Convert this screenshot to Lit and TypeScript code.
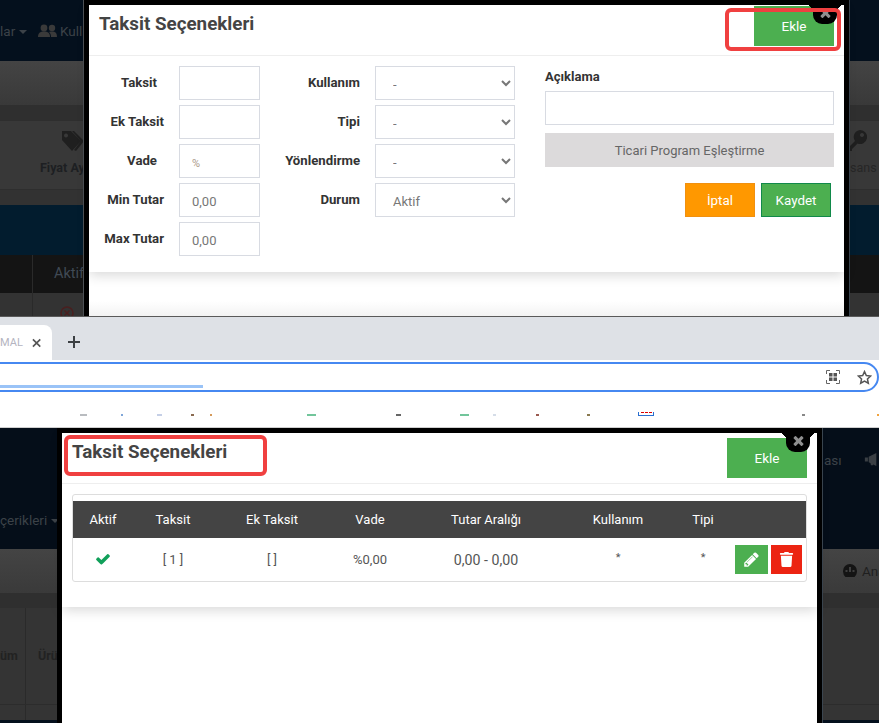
import { LitElement, html, css } from "lit";
import { customElement } from "lit/decorators.js";

const FA_TIMES = "M1490 1322q0 40-28 68l-136 136q-28 28-68 28t-68-28l-294-294-294 294q-28 28-68 28t-68-28l-136-136q-28-28-28-68t28-68l294-294-294-294q-28-28-28-68t28-68l136-136q28-28 68-28t68 28l294 294 294-294q28-28 68-28t68 28l136 136q28 28 28 68t-28 68l-294 294 294 294q28 28 28 68z";
const FA_CHECK = "M1671 566q0 40-28 68l-724 724-136 136q-28 28-68 28t-68-28l-136-136-362-362q-28-28-28-68t28-68l136-136q28-28 68-28t68 28l294 295 656-657q28-28 68-28t68 28l136 136q28 28 28 68z";
const FA_PENCIL = "M491 1536l91-91-235-235-91 91v107h128v128h107zm523-928q0-22-22-22-10 0-17 7l-542 542q-7 7-7 17 0 22 22 22 10 0 17-7l542-542q7-7 7-17zm-54-192l416 416-832 832h-416v-416zm683 96q0 53-37 90l-166 166-416-416 166-165q36-38 90-38 53 0 91 38l235 234q37 39 37 91z";
const FA_TRASH = "M432 32H312l-9.4-18.7A24 24 0 0 0 281.1 0H166.8a23.72 23.72 0 0 0-21.4 13.3L136 32H16A16 16 0 0 0 0 48v32a16 16 0 0 0 16 16h416a16 16 0 0 0 16-16V48a16 16 0 0 0-16-16zM53.2 467a48 48 0 0 0 47.9 45h245.8a48 48 0 0 0 47.9-45L416 128H32z";

const specks: [number, number, string][] = [
  [80, 7, "#b9bcc0"], [121, 2, "#7fa6d8"], [157, 5, "#c5cfe6"], [191, 3, "#8a6a50"], [210, 2, "#d59a5a"],
  [307, 9, "#72c59b"], [396, 5, "#666666"], [460, 9, "#72c59b"], [493, 3, "#d5dde8"], [536, 3, "#9a5a50"],
  [587, 3, "#8a7a50"], [802, 3, "#888888"], [877, 2, "#f2a33c"],
];

@customElement("app-root")
export class AppRoot extends LitElement {
  static styles = css`
    :host { display: block; width: 879px; height: 723px; overflow: hidden; font-family: Roboto, "Noto Sans", sans-serif; color: #444; background: #fff; }
    * { box-sizing: border-box; }
    .shot { position: relative; overflow: hidden; }
    .shot.top { height: 316px; }
    .shot.low { height: 295px; }
    .band { position: relative; }
    .t1 { height: 61px; background: #04101d; }
    .t2 { height: 44px; background: linear-gradient(#444444, #393939); }
    .t3 { height: 15px; background: #2f2f2f; }
    .t4 { height: 70px; background: #383838; border-top: 1px solid #2e2e2e; border-bottom: 1px solid #2e2e2e; }
    .t5 { height: 15px; background: #323232; }
    .t6 { height: 50px; background: #021c2e; }
    .t7 { height: 38px; background: #141414; }
    .t8 { height: 23px; background: #333333; }
    .l1 { height: 121px; background: #050e19; }
    .l2 { height: 44px; background: linear-gradient(#444444, #3a3a3a); }
    .l3 { height: 127px; background: #343434; border-top: 15px solid #2f2f2f; }
    .l4 { height: 3px; background: #04101d; }
    .ghost { position: absolute; white-space: nowrap; font-size: 13.5px; color: #3c4248; }
    .ghost.bold { font-weight: 700; font-size: 12.5px; color: #1d1f22; }
    .ghost.aktif { font-size: 14.5px; color: #404a55; }
    .ghost svg { display: block; }
    .caret { display: inline-block; width: 0; height: 0; border: 4px solid transparent; border-top-color: #3c4248; border-bottom: 0; margin-left: 4px; vertical-align: middle; }
    .cell-line { position: absolute; top: 0; bottom: 0; width: 1px; background: #2a2a2a; }
    .row-line { position: absolute; left: 0; right: 0; bottom: 15px; height: 1px; background: #2c2c2c; }

    .dialog { position: absolute; top: 0; bottom: 0; width: 765px; border: 5px solid #000; border-bottom: 0; background: #fff; }
    .top .dialog { left: 84px; box-shadow: 1px 0 0 #3b4650, -1px 0 0 #4d5155; background: linear-gradient(#fff 296px, #f3f3f3); }
    .low .dialog { left: 57px; box-shadow: 1px 0 0 #3b4650; }
    .tab { position: absolute; top: -5px; right: 7px; width: 24px; height: 24px; background: #000; border-radius: 0 0 9px 9px; display: flex; align-items: center; justify-content: center; padding-top: 1px; }
    .tab::before, .tab::after { content: ""; position: absolute; top: 5px; width: 7px; height: 7px; }
    .tab::before { left: -7px; background: radial-gradient(circle at 0 100%, transparent 7px, #000 7px); }
    .tab::after { right: -7px; background: radial-gradient(circle at 100% 100%, transparent 7px, #000 7px); }
    .tab svg { width: 15px; height: 15px; fill: #8f8f8f; }
    .sheet { background: #fff; box-shadow: 0 3px 12px rgba(0, 0, 0, 0.16); }
    .head { height: 51px; border-bottom: 1px solid #eeeeee; display: flex; justify-content: space-between; padding: 0 10px; position: relative; }
    h2 { margin: 8px 0 0; font-size: 18.8px; line-height: 22px; font-weight: 700; color: #444; }
    .add { width: 80px; height: 40px; background: #4caf50; color: #fff; border: 0; font: 400 13.5px Roboto, sans-serif; padding: 0; }
    .top .add { margin-top: 1px; }
    .low .head { padding-top: 5px; }
    .low h2 { margin-top: 3px; }

    .form { display: flex; height: 216px; padding-top: 10px; }
    .col { display: grid; row-gap: 5px; grid-auto-rows: 34px; align-content: start; align-items: center; }
    .f1 { grid-template-columns: 75px 81px; column-gap: 15px; }
    .f2 { grid-template-columns: 100px 140px; column-gap: 15px; }
    .f3 { width: 289px; margin-left: 30px; }
    label { text-align: right; font-size: 13.2px; font-weight: 700; color: #333; margin-top: -2px; white-space: nowrap; }
    label.in { padding-right: 7px; }
    input, select { width: 100%; height: 34px; border: 1.5px solid #d8dbe2; border-radius: 0; background: #fff; color: #777; font: 400 13px Roboto, sans-serif; padding: 2px 12px 0; outline: 0; }
    select { padding-left: 13px; }
    input::placeholder { color: #a98; font-size: 11px; opacity: 1; }
    .f3 .cap { font-size: 13px; font-weight: 700; color: #333; height: 20px; line-height: 21px; margin-bottom: 5px; }
    .match { display: block; width: 100%; height: 34px; margin-top: 8px; border: 0; background: #dcdadb; color: #666; font: 400 13px Roboto, sans-serif; }
    .acts { display: flex; justify-content: flex-end; gap: 6px; margin-top: 16px; padding-right: 3px; }
    .acts button { width: 70px; height: 34px; color: #fff; font: 400 13.4px Roboto, sans-serif; padding: 0; }
    .cancel { background: #ff9800; border: 1px solid #f09010; }
    .save { background: #4caf50; border: 1px solid #11894a; }

    .body { padding: 10px 10px 25px; }
    .card { height: 88px; border: 1px solid #dddddd; border-radius: 3px; padding-top: 6px; }
    .grid { display: grid; grid-template-columns: 60px 80px 118px 78px 154px 110px 60px 1fr; align-items: center; justify-items: center; }
    .thead { height: 37px; background: #444444; color: #fff; font-size: 13px; }
    .tbody { height: 43px; font-size: 13px; color: #555; }
    .range { font-size: 14.2px; }
    .tbody svg.ok { width: 16px; height: 16px; fill: #11a05a; display: block; margin-top: -2px; }
    .star { font-size: 11px; margin-top: -5px; }
    .rowacts { display: flex; gap: 3px; margin-top: -1px; justify-self: start; padding-left: 2px; }
    .rowacts span { height: 29px; display: flex; align-items: center; justify-content: center; }
    .edit { width: 33px; background: #4caf50; }
    .del { width: 31px; background: #ec2412; }
    .rowacts svg { width: 15px; height: 15px; fill: #fff; }
    .rowacts .edit svg { width: 17px; height: 17px; }
    .mark { position: absolute; border: 4px solid #f04040; border-radius: 6px; pointer-events: none; }
    .mark.m1 { left: 725px; top: 8px; width: 116px; height: 43px; }
    .mark.m2 { left: 64px; top: 7px; width: 203px; height: 41px; }

    .chrome { height: 112px; position: relative; background: #fff; border-top: 1px solid #5a5a5a; border-bottom: 1px solid #cfcfcf; }
    .strip { height: 43px; background: #dee1e6; padding-top: 8px; display: flex; align-items: flex-start; }
    .tabb { width: 52px; height: 35px; background: #fff; border-radius: 0 8px 0 0; display: flex; align-items: center; justify-content: flex-end; padding-right: 11px; gap: 9px; font-size: 11px; color: #b4b4c0; position: relative; }
    .tabb svg { width: 10px; height: 10px; stroke: #555; stroke-width: 1.8; display: block; }
    .plus { margin-left: 15px; margin-top: 10px; width: 14px; height: 14px; }
    .plus svg { display: block; stroke: #3c4043; stroke-width: 2; }
    .omni { position: relative; height: 30px; margin-top: 2px; margin-left: -20px; border: 2px solid #4688f1; border-radius: 0 15px 15px 0; display: flex; justify-content: flex-end; align-items: center; gap: 17px; padding-right: 5px; }
    .omni svg { display: block; }
    .progress { position: absolute; left: 18px; bottom: 2px; width: 203px; height: 3px; background: #9ac3f7; }
    .speck { position: absolute; top: 97px; height: 2px; }
    .fav { position: absolute; left: 638px; top: 95px; width: 16px; height: 4px; border: 1px solid #2a6fd0; border-top: 0; display: flex; justify-content: center; gap: 1px; }
    .fav i { width: 3px; height: 1px; background: #d00; }
  `;

  private closeTab() {
    return html`<div class="tab"><svg viewBox="0 0 1792 1792"><path d=${FA_TIMES}></path></svg></div>`;
  }

  private backdropTop() {
    return html`
      <div class="band t1">
        <span class="ghost" style="left:0;top:23px">lar<i class="caret"></i></span>
        <span class="ghost" style="left:38px;top:24px">
          <svg width="19" height="14" viewBox="0 0 19 14" fill="#3a3a3a"><circle cx="6" cy="4" r="3.4"></circle><circle cx="14" cy="4" r="3.2"></circle><path d="M0 13c0-4 2-5.5 6-5.5s6 1.5 6 5.5zM13 13c0-2-.5-4-2-5 1-.5 2-.6 3-.6 3.500 0 5 1.600 5 5.600z"></path></svg>
        </span>
        <span class="ghost" style="left:60px;top:23px">Kull</span>
      </div>
      <div class="band t2"></div>
      <div class="band t3"></div>
      <div class="band t4">
        <span class="ghost" style="left:61px;top:9px">
          <svg width="24" height="22" viewBox="0 0 24 22" fill="#1f1f1f"><path d="M1 1h9l10 10-9 10L1 10zM5 3.500a2 2 0 1 0 .01 0zM13 1l10 10-8 10-2-1 7-9-9-10z"></path></svg>
        </span>
        <span class="ghost bold" style="left:40px;top:39px">Fiyat Ayarları</span>
        <span class="ghost" style="left:849px;top:9px">
          <svg width="18" height="22" viewBox="0 0 18 22" fill="#1f1f1f"><path d="M11 0a7 7 0 1 1-2.500 13.500L3 19v2H0v-4l6-6A7 7 0 0 1 11 0zm2 3a2 2 0 1 0 .01 0z"></path></svg>
        </span>
        <span class="ghost bold" style="left:850px;top:39px;color:#262626;font-weight:400">sans</span>
      </div>
      <div class="band t5"></div>
      <div class="band t6"></div>
      <div class="band t7">
        <i class="cell-line" style="left:32px"></i>
        <span class="ghost aktif" style="left:54px;top:10px">Aktif</span>
      </div>
      <div class="band t8">
        <i class="cell-line" style="left:32px"></i>
        <span class="ghost" style="left:60px;top:13px">
          <svg width="14" height="14" viewBox="0 0 14 14" fill="none" stroke="#4a1f1f" stroke-width="1.500"><circle cx="7" cy="7" r="6"></circle><path d="M4.500 4.500l5 5m0-5l-5 5"></path></svg>
        </span>
      </div>
    `;
  }

  private backdropLow() {
    return html`
      <div class="band l1">
        <span class="ghost" style="left:0;top:84px">çerikleri<i class="caret"></i></span>
        <span class="ghost" style="left:824px;top:24px">ası</span>
        <span class="ghost" style="left:864px;top:25px">
          <svg width="17" height="13" viewBox="0 0 20 17" fill="#3a3f44"><path d="M0 6h4v5H0zM5 5l10-5v17L5 12zM7 12h3l1 4H8z"></path></svg>
        </span>
      </div>
      <div class="band l2">
        <span class="ghost" style="left:843px;top:15px">
          <svg width="14" height="13" viewBox="0 0 14 13" fill="#141414"><path fill-rule="evenodd" d="M7 0a7 7 0 0 1 7 7c0 2.500-1 4.500-2.500 6h-9A8 8 0 0 1 0 7a7 7 0 0 1 7-7zM6 3h2v5H6zM2.500 6h2v2h-2zM9.500 6h2v2h-2z"></path></svg>
        </span>
        <span class="ghost" style="left:862px;top:14px;color:#1f1f1f">Ana</span>
      </div>
      <div class="band l3">
        <i class="cell-line" style="left:25px"></i>
        <i class="row-line"></i>
        <span class="ghost bold" style="left:0;top:40px;color:#222">üm</span>
        <span class="ghost bold" style="left:38px;top:40px;color:#222">Ürü</span>
      </div>
      <div class="band l4"></div>
    `;
  }

  render() {
    return html`
      <section class="shot top">
        ${this.backdropTop()}
        <div class="dialog">
          <div class="sheet">
            <div class="head">
              <h2>Taksit Seçenekleri</h2>
              <button class="add">Ekle</button>
            </div>
            <div class="form">
              <div class="col f1">
                <label class="in">Taksit</label><input />
                <label>Ek Taksit</label><input />
                <label class="in">Vade</label><input placeholder="%" />
                <label>Min Tutar</label><input value="0,00" />
                <label>Max Tutar</label><input value="0,00" />
              </div>
              <div class="col f2">
                <label>Kullanım</label><select><option>-</option></select>
                <label>Tipi</label><select><option>-</option></select>
                <label>Yönlendirme</label><select><option>-</option></select>
                <label>Durum</label><select><option>Aktif</option></select>
              </div>
              <div class="f3">
                <div class="cap">Açıklama</div>
                <input />
                <button class="match">Ticari Program Eşleştirme</button>
                <div class="acts">
                  <button class="cancel">İptal</button>
                  <button class="save">Kaydet</button>
                </div>
              </div>
            </div>
          </div>
          ${this.closeTab()}
        </div>
        <div class="mark m1"></div>
      </section>

      <section class="chrome">
        <div class="strip">
          <div class="tabb"><span>MAL</span>
            <svg viewBox="0 0 10 10"><path d="M1 1l8 8m0-8l-8 8"></path></svg>
          </div>
          <div class="plus"><svg width="14" height="14" viewBox="0 0 14 14"><path d="M7 1v12M1 7h12"></path></svg></div>
        </div>
        <div class="omni">
          <div class="progress"></div>
          <svg width="14" height="14" viewBox="0 0 14 14" fill="#555"><rect x="3" y="3" width="3.500" height="3.500"></rect><rect x="7.500" y="3" width="3.500" height="3.500"></rect><rect x="3" y="7.500" width="3.500" height="3.500"></rect><rect x="7.500" y="7.500" width="3.500" height="3.500"></rect><path d="M.5 4V.5H4M10 .5h3.500V4M13.500 10v3.500H10M4 13.500H.5V10" fill="none" stroke="#666"></path></svg>
          <svg width="15" height="15" viewBox="0 0 24 24" fill="none" stroke="#555" stroke-width="2.400"><path d="M12 2.500l2.900 6.300 6.900.8-5.100 4.700 1.400 6.800-6.100-3.400-6.100 3.400 1.400-6.800L2.200 9.600l6.900-.8z"></path></svg>
        </div>
        ${specks.map(([x, w, c]) => html`<i class="speck" style="left:${x}px;width:${w}px;background:${c}"></i>`)}
        <div class="fav"><i></i><i></i><i></i></div>
      </section>

      <section class="shot low">
        ${this.backdropLow()}
        <div class="dialog">
          <div class="sheet">
            <div class="head">
              <h2>Taksit Seçenekleri</h2>
              <button class="add">Ekle</button>
            </div>
            <div class="body">
              <div class="card">
                <div class="grid thead">
                  <span>Aktif</span><span>Taksit</span><span>Ek Taksit</span><span>Vade</span>
                  <span>Tutar Aralığı</span><span>Kullanım</span><span>Tipi</span><span></span>
                </div>
                <div class="grid tbody">
                  <svg class="ok" viewBox="0 0 1792 1792"><path d=${FA_CHECK}></path></svg>
                  <span>[ 1 ]</span><span>[ ]</span><span>%0,00</span><span class="range">0,00 - 0,00</span>
                  <span class="star">*</span><span class="star">*</span>
                  <div class="rowacts">
                    <span class="edit"><svg viewBox="0 0 1792 1792"><path d=${FA_PENCIL}></path></svg></span>
                    <span class="del"><svg viewBox="0 0 448 512"><path d=${FA_TRASH}></path></svg></span>
                  </div>
                </div>
              </div>
            </div>
          </div>
          ${this.closeTab()}
        </div>
        <div class="mark m2"></div>
      </section>
    `;
  }
}
